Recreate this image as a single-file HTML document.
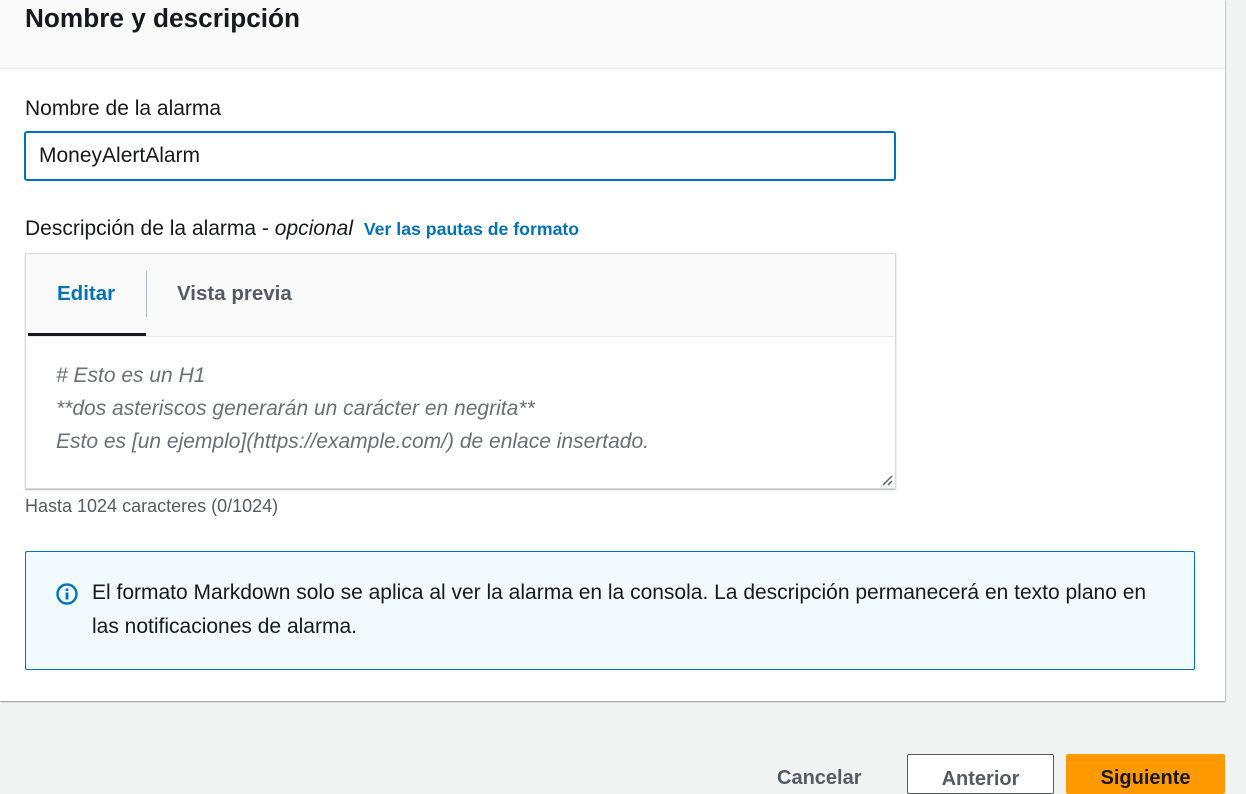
<!DOCTYPE html>
<html><head><meta charset="utf-8"><style>
*{box-sizing:border-box;margin:0;padding:0}
body{width:1246px;height:774px;overflow:hidden;background:#f2f3f3;font-family:"Liberation Sans",sans-serif;color:#16191f;position:relative}
.card{position:absolute;left:0;top:0;width:1225px;height:701px;background:#fff;box-shadow:0 1px 1px rgba(0,28,36,.3),1px 1px 1px rgba(0,28,36,.15)}
.hdr{height:69px;background:#fafafa;border-bottom:1px solid #eaeded;padding:3px 25px}
.hdr h2{font-size:26.2px;font-weight:bold;line-height:30px}
.abs{position:absolute}
.lbl{font-size:21px}
.inp{left:24px;top:131px;width:872px;height:50px;border:2px solid #0073bb;border-radius:3px;font-size:21px;padding:12px 13px;line-height:22px}
.md{left:25px;top:253px;width:871px;height:236px;border:1px solid #d5dbdb;box-shadow:0 1px 1px rgba(0,28,36,.3)}
.tabs{height:83px;background:#fafafa;border-bottom:1px solid #eaeded;position:relative}
.tab{position:absolute;top:28px;font-size:20.5px;font-weight:bold}
.ta{padding:22px 30px;font-style:italic;color:#687078;font-size:21px;line-height:33px}
.info{left:25px;top:551px;width:1170px;height:119px;background:#f1faff;border:1px solid #0073bb;border-radius:2px}
.btn{top:754px;height:40px;border-radius:2px;font-weight:bold;font-size:20px;text-align:center;padding-top:13px}
</style></head><body>
<div class="card">
 <div class="hdr"><h2>Nombre y descripción</h2></div>
 <div class="abs lbl" style="left:25px;top:97px">Nombre de la alarma</div>
 <div class="abs inp">MoneyAlertAlarm</div>
 <div class="abs lbl" style="left:25px;top:217px">Descripción de la alarma - <i>opcional</i> <b style="color:#0073bb;font-size:17.7px;margin-left:5px">Ver las pautas de formato</b></div>
 <div class="abs md">
  <div class="tabs">
   <div class="tab" style="left:31px;color:#0073bb">Editar</div>
   <div class="abs" style="left:120px;top:17px;width:1px;height:46px;background:#aab7b8"></div>
   <div class="tab" style="left:151px;color:#545b64">Vista previa</div>
   <div class="abs" style="left:2px;top:79px;width:118px;height:3px;background:#16191f"></div>
  </div>
  <div class="ta"># Esto es un H1<br>**dos asteriscos generarán un carácter en negrita**<br>Esto es [un ejemplo](https://example.com/) de enlace insertado.</div>
  <svg class="abs" style="right:2px;bottom:2px" width="12" height="12"><path d="M2 11L11 2M7 11L11 7" stroke="#545b64" stroke-width="1.4"/></svg>
 </div>
 <div class="abs" style="left:25px;top:496px;font-size:18px;color:#545b64">Hasta 1024 caracteres (0/1024)</div>
 <div class="abs info">
  <svg class="abs" style="left:30px;top:31px" width="22" height="22" viewBox="0 0 22 22"><circle cx="11" cy="11" r="9.5" fill="none" stroke="#0073bb" stroke-width="2.4"/><rect x="9.6" y="9.5" width="2.8" height="7" fill="#0073bb"/><rect x="9.6" y="5.5" width="2.8" height="2.6" fill="#0073bb"/></svg>
  <div class="abs" style="left:66px;top:24px;width:1085px;font-size:21px;line-height:34px">El formato Markdown solo se aplica al ver la alarma en la consola. La descripción permanecerá en texto plano en las notificaciones de alarma.</div>
 </div>
</div>
<div class="abs" style="left:777px;top:767px;font-size:20px;font-weight:bold;color:#545b64">Cancelar</div>
<div class="abs btn" style="left:907px;width:147px;background:#fff;border:1px solid #545b64;color:#545b64">Anterior</div>
<div class="abs btn" style="left:1066px;width:159px;background:#ff9900;color:#16191f">Siguiente</div>
</body></html>
